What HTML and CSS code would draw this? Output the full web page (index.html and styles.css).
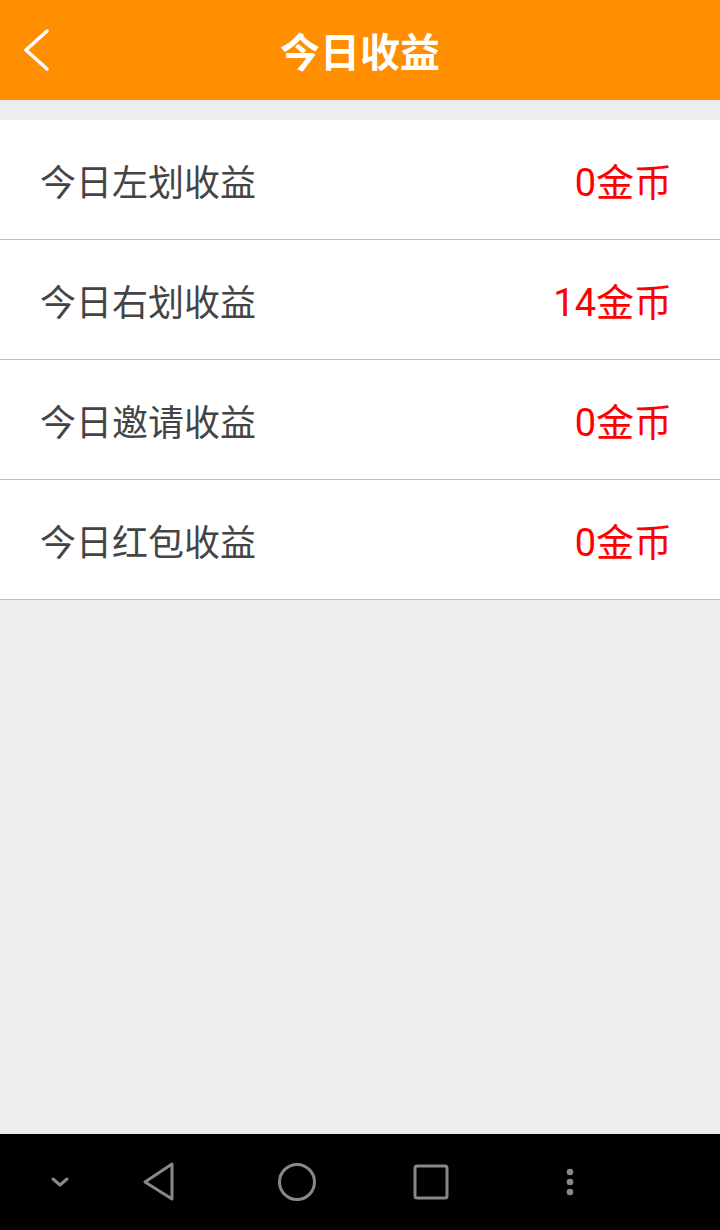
FILE: index.html
```html
<!DOCTYPE html>
<html lang="zh-CN">
<head>
  <meta charset="UTF-8">
  <meta name="viewport" content="width=device-width, initial-scale=1.0">
  <title>今日收益</title>
  <link rel="stylesheet" href="styles.css">
</head>
<body>
  <div class="page">
    <!-- 顶部标题栏 -->
    <div class="header">
      <svg class="back" width="30" height="42" viewBox="0 0 30 42">
        <polyline points="26,2 5,21 26,40" fill="none" stroke="#fff" stroke-width="3.5" stroke-linecap="round" stroke-linejoin="round"/>
      </svg>
      <h1>今日收益</h1>
    </div>

    <!-- 收益列表 -->
    <div class="list">
      <div class="row"><span class="label">今日左划收益</span><span class="value">0金币</span></div>
      <div class="row"><span class="label">今日右划收益</span><span class="value">14金币</span></div>
      <div class="row"><span class="label">今日邀请收益</span><span class="value">0金币</span></div>
      <div class="row"><span class="label">今日红包收益</span><span class="value">0金币</span></div>
    </div>
  </div>

  <!-- 系统导航栏 -->
  <div class="navbar">
    <svg class="nav-down" width="20" height="12" viewBox="0 0 20 12">
      <polyline points="3,3 10,9 17,3" fill="none" stroke="#888" stroke-width="3" stroke-linecap="round" stroke-linejoin="round"/>
    </svg>
    <svg class="nav-back" width="34" height="40" viewBox="0 0 34 40">
      <polygon points="30,2 30,37 3,20" fill="none" stroke="#888" stroke-width="3" stroke-linejoin="round"/>
    </svg>
    <svg class="nav-home" width="40" height="40" viewBox="0 0 40 40">
      <circle cx="20" cy="20" r="17.5" fill="none" stroke="#888" stroke-width="3"/>
    </svg>
    <svg class="nav-recent" width="36" height="36" viewBox="0 0 36 36">
      <rect x="2" y="2" width="32" height="32" rx="2" fill="none" stroke="#888" stroke-width="3"/>
    </svg>
    <svg class="nav-menu" width="10" height="30" viewBox="0 0 10 30">
      <circle cx="5" cy="5" r="3.3" fill="#888"/>
      <circle cx="5" cy="15" r="3.3" fill="#888"/>
      <circle cx="5" cy="25" r="3.3" fill="#888"/>
    </svg>
  </div>
</body>
</html>
```

FILE: styles.css
```css
body {
  margin: 0;
  width: 720px;
  height: 1230px;
  display: flex;
  flex-direction: column;
  background-color: #ededed;
  font-family: "Roboto", "Noto Sans CJK SC", sans-serif;
}

.page {
  flex: 1;
}

.header {
  height: 100px;
  background-color: #ff8f00;
  display: flex;
  align-items: center;
  justify-content: center;
  position: relative;
}
.header h1 {
  margin: 0;
  font-size: 40px;
  font-weight: bold;
  color: #fff;
}
.back {
  position: absolute;
  left: 21px;
  top: 29px;
}

.list {
  margin-top: 20px;
  background-color: #fff;
}
.row {
  height: 119px;
  border-bottom: 1px solid #bdbdbd;
  display: flex;
  align-items: center;
  justify-content: space-between;
  padding: 0 48px 0 40px;
  font-size: 36px;
}
.label {
  color: #444;
}
.value {
  color: #f00;
  font-size: 38px;
}

.navbar {
  height: 96px;
  background-color: #000;
  display: flex;
  align-items: center;
}
.nav-down {
  margin-left: 50px;
}
.nav-back {
  margin-left: 72px;
}
.nav-home {
  margin-left: 101px;
}
.nav-recent {
  margin-left: 96px;
}
.nav-menu {
  margin-left: 116px;
}
```
